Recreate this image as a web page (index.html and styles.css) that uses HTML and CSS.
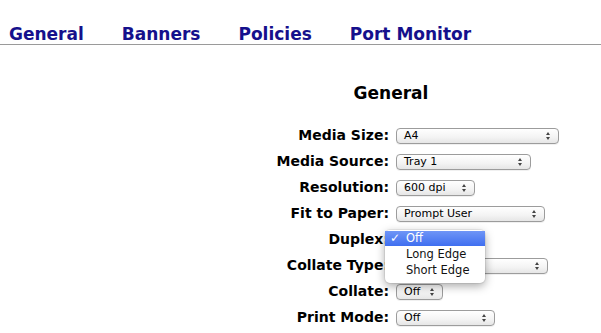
FILE: index.html
```html
<!DOCTYPE html>
<html lang="en">
<head>
  <meta charset="UTF-8">
  <title>Printer Options</title>
  <link rel="stylesheet" href="styles.css">
</head>
<body>
  <nav class="tabs">
    <a href="#general">General</a>
    <a href="#banners">Banners</a>
    <a href="#policies">Policies</a>
    <a href="#port">Port Monitor</a>
  </nav>

  <h2 class="options-title">General</h2>

  <div class="options">
    <div class="opt-label">Media Size:</div>
    <div class="opt-value"><span class="pick w-media">A4</span></div>

    <div class="opt-label">Media Source:</div>
    <div class="opt-value"><span class="pick w-source">Tray 1</span></div>

    <div class="opt-label">Resolution:</div>
    <div class="opt-value"><span class="pick w-res">600 dpi</span></div>

    <div class="opt-label">Fit to Paper:</div>
    <div class="opt-value"><span class="pick w-fit">Prompt User</span></div>

    <div class="opt-label">Duplex:</div>
    <div class="opt-value">
      <span class="pick w-small">Off</span>
      <ul class="menu">
        <li class="menu-item active"><span class="check">&#10003;</span>Off</li>
        <li class="menu-item">Long Edge</li>
        <li class="menu-item">Short Edge</li>
      </ul>
    </div>

    <div class="opt-label">Collate Type:</div>
    <div class="opt-value"><span class="pick w-collate">Off</span></div>

    <div class="opt-label">Collate:</div>
    <div class="opt-value"><span class="pick w-small">Off</span></div>

    <div class="opt-label">Print Mode:</div>
    <div class="opt-value"><span class="pick w-mode">Off</span></div>
  </div>
</body>
</html>
```

FILE: styles.css
```css
body {
  margin: 0;
  font-family: 'DejaVu Sans', 'Liberation Sans', sans-serif;
  background: #fff;
  overflow: hidden;
}

/* onglets en haut */
.tabs {
  display: flex;
  gap: 38px;
  padding: 24px 9px 0 9px;
  border-bottom: 1px solid #9a9a9a;
}
.tabs a {
  color: #15108c;
  text-decoration: none;
  font-weight: bold;
  font-size: 17px;
  line-height: 20px;
}

/* titre centre sur la separation label / champ */
.options-title {
  margin: 38px 0 20px 0;
  padding-left: 181px;
  text-align: center;
  font-size: 17px;
  line-height: 20px;
  font-weight: bold;
  color: #000;
}

/* formulaire */
.options {
  display: grid;
  grid-template-columns: 391px 1fr;
  grid-auto-rows: 26px;
  align-items: center;
}
.opt-label {
  text-align: right;
  padding-right: 2px;
  padding-bottom: 2px;
  font-size: 14px;
  line-height: 16px;
  font-weight: bold;
  color: #000;
  white-space: nowrap;
}
.opt-value {
  position: relative;
  display: flex;
  align-items: center;
}

.pick {
  position: relative;
  box-sizing: border-box;
  height: 16px;
  margin-left: 5px;
  padding-left: 7px;
  border: 1px solid #9c9c9c;
  border-radius: 4px;
  background: linear-gradient(#ffffff, #f3f3f3 60%, #e6e6e6);
  box-shadow: 0 1px 0 rgba(0,0,0,0.06);
  font-size: 11px;
  line-height: 14px;
  color: #000;
}
.pick::before,
.pick::after {
  content: "";
  position: absolute;
  right: 8px;
  border-left: 2.5px solid transparent;
  border-right: 2.5px solid transparent;
}
.pick::before {
  top: 3px;
  border-bottom: 3px solid #444;
}
.pick::after {
  top: 8px;
  border-top: 3px solid #444;
}
.w-media { width: 163px; }
.w-source { width: 135px; }
.w-res { width: 79px; }
.w-fit { width: 149px; }
.w-collate { width: 152px; }
.w-small { width: 47px; }
.w-mode { width: 99px; }

/* menu deroulant ouvert */
.menu {
  position: absolute;
  left: -6px;
  top: -2px;
  width: 100px;
  margin: 0;
  padding: 1px 0 5px 0;
  list-style: none;
  background: #fff;
  border-radius: 5px;
  box-shadow: 0 3px 10px rgba(0,0,0,0.35), 0 0 0 1px rgba(0,0,0,0.06);
  z-index: 5;
}
.menu-item {
  position: relative;
  height: 16px;
  padding-left: 21px;
  font-size: 11.5px;
  line-height: 16px;
  color: #111;
}
.menu-item.active {
  height: 15px;
  line-height: 15px;
  background: linear-gradient(#6f95f6, #3f6ff0);
  color: #fff;
}
.check {
  position: absolute;
  left: 5px;
  font-size: 12px;
  font-weight: bold;
}
```
